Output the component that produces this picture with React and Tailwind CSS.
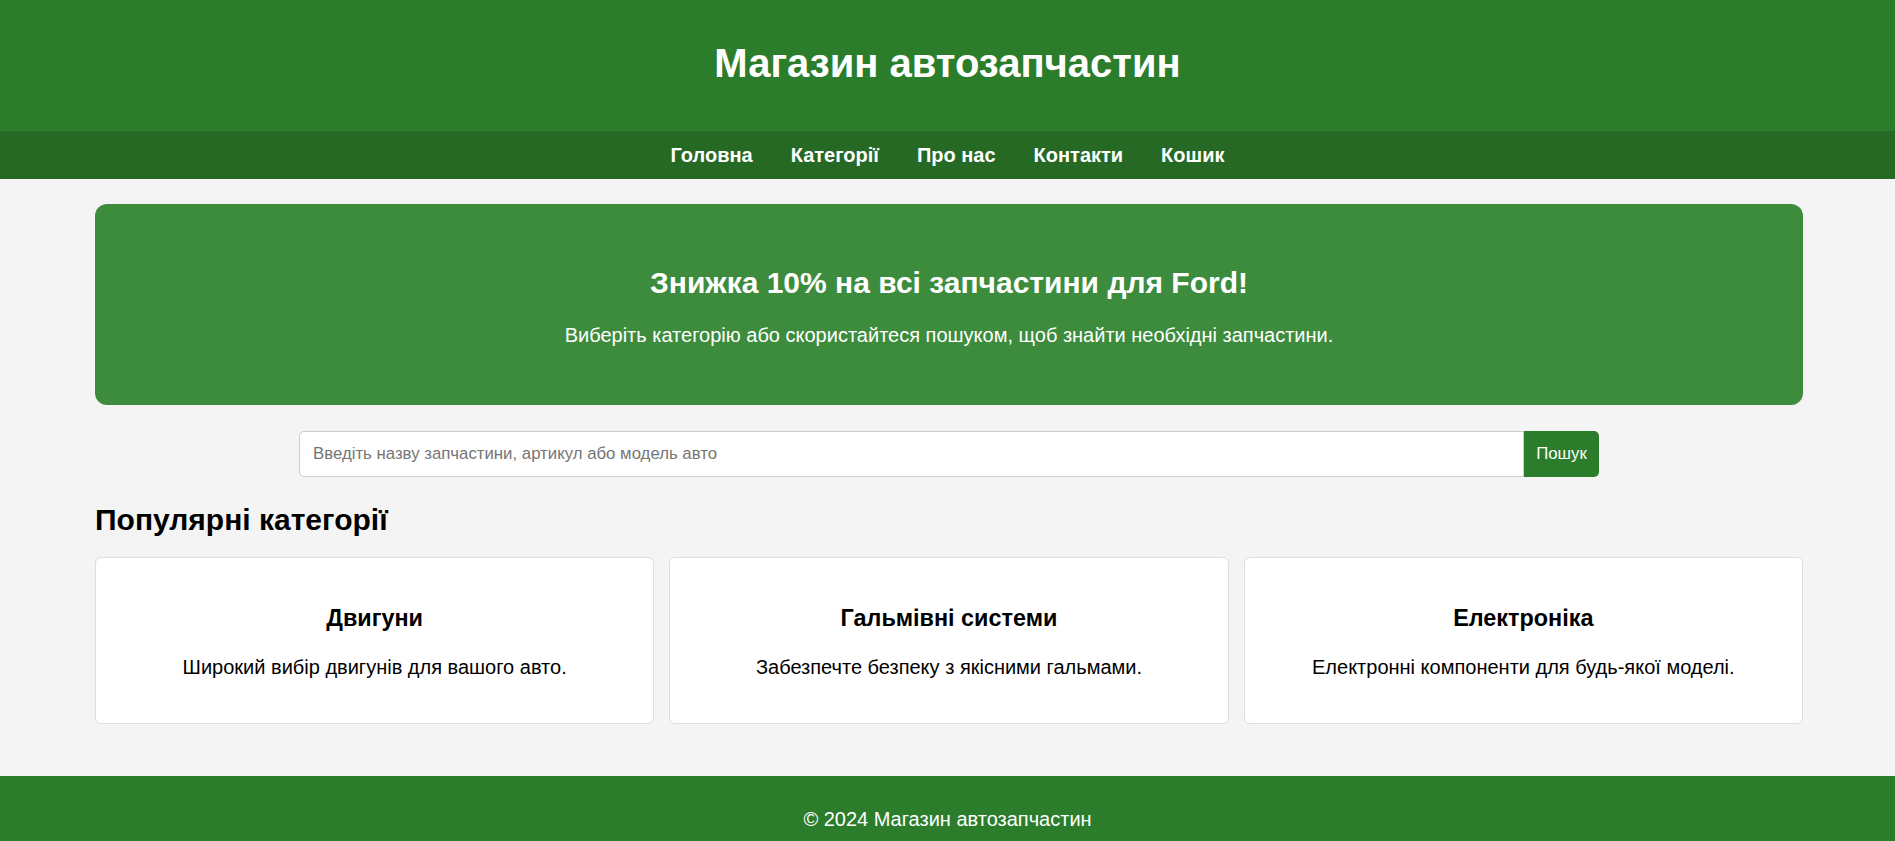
const navLinks = ["Головна", "Категорії", "Про нас", "Контакти", "Кошик"];

const categories = [
  { title: "Двигуни", text: "Широкий вибір двигунів для вашого авто." },
  { title: "Гальмівні системи", text: "Забезпечте безпеку з якісними гальмами." },
  { title: "Електроніка", text: "Електронні компоненти для будь-якої моделі." },
];

function CategoryCard({ title, text }) {
  return (
    <div className="bg-white border border-[#dddddd] rounded-[6px] pt-[47px] pb-[44px] px-6 text-center">
      <h3 className="text-[23.4px] leading-[27px] font-bold text-black">{title}</h3>
      <p className="mt-[24px] text-[20px] leading-[23px] text-black">{text}</p>
    </div>
  );
}

export default function App() {
  return (
    <div
      className="min-h-screen bg-[#f4f4f4] text-[20px]"
      style={{ fontFamily: '"Liberation Sans", Arial, sans-serif' }}
    >
      {/* Header */}
      <header className="h-[131px] bg-[#2b7d2b] flex items-center justify-center">
        <h1 className="text-[40px] leading-[46px] font-bold text-white -mt-[5px]">
          Магазин автозапчастин
        </h1>
      </header>

      {/* Nav */}
      <nav className="h-[48px] bg-[#256925] flex items-center justify-center gap-[38px]">
        {navLinks.map((link) => (
          <a key={link} href="#" className="text-white font-bold text-[20px] leading-[23px]">
            {link}
          </a>
        ))}
      </nav>

      {/* Main */}
      <main className="pl-[95px] pr-[92px] pt-[25px]">
        <section className="bg-[#3d8c3d] rounded-[12px] pt-[62px] pb-[58px] text-center text-white">
          <h2 className="text-[30px] leading-[34px] font-bold">
            Знижка 10% на всі запчастини для Ford!
          </h2>
          <p className="mt-[24px] text-[20px] leading-[23px]">
            Виберіть категорію або скористайтеся пошуком, щоб знайти необхідні запчастини.
          </p>
        </section>

        <div className="mt-[26px] flex justify-center">
          <div className="flex w-[1300px] h-[46px]">
            <input
              type="text"
              placeholder="Введіть назву запчастини, артикул або модель авто"
              className="flex-1 bg-white border border-[#cccccc] rounded-l-[5px] px-[13px] text-[16.8px] text-black placeholder:text-[#757575] outline-none"
            />
            <button className="w-[75px] bg-[#2b7d2b] text-white text-[16.8px] rounded-r-[5px]">
              Пошук
            </button>
          </div>
        </div>

        <h2 className="mt-[26px] mb-[20px] text-[30px] leading-[34px] font-bold text-black">
          Популярні категорії
        </h2>

        <div className="grid grid-cols-3 gap-[15px]">
          {categories.map((c) => (
            <CategoryCard key={c.title} {...c} />
          ))}
        </div>
      </main>

      {/* Footer */}
      <footer className="mt-[52px] bg-[#2b7d2b] pt-[32px] pb-[32px] text-center text-white text-[20px] leading-[23px]">
        © 2024 Магазин автозапчастин
      </footer>
    </div>
  );
}
